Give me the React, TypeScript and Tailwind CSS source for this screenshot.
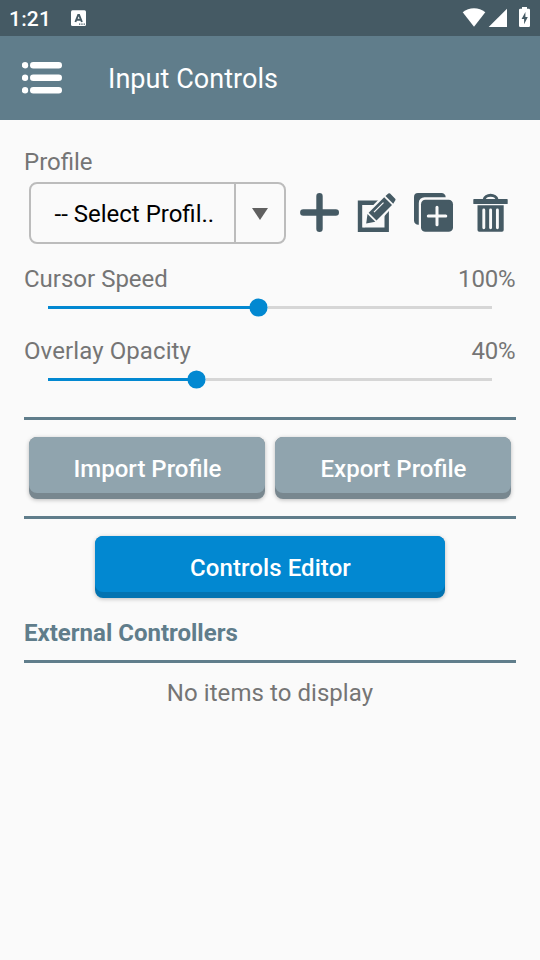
import type { ReactNode } from "react";

const StatusBar = () => (
  <div className="flex h-9 items-center bg-[#455a64] pl-[9px] text-white">
    <span className="w-[62px] pt-[2px] text-[21px] leading-[34px] font-medium tracking-[0.2px]">
      1:21
    </span>
    <svg className="h-4 w-[15px]" viewBox="0 0 15 16">
      <rect y=".3" width="15" height="15.7" rx="1.5" fill="#fff" />
      <path
        d="M4.4 12 7.2 5h.9l2.8 7M5.5 9.8h4.3"
        fill="none"
        stroke="#455a64"
        strokeWidth="1.9"
      />
      <path
        d="M8 14.2h1.3M10.3 14.2h1.3M12.6 14.2h1.3"
        stroke="#455a64"
        strokeWidth="1.2"
      />
    </svg>
    <svg className="ml-auto h-9 w-[80px]" viewBox="460 0 80 36" fill="#fff">
      <path d="M474 26.7 462.7 12.3C466 9.6 469.8 8.2 474 8.2s8 1.4 11.3 4.1z" />
      <path d="M507 8.7V27h-18.3z" />
      <path
        fillRule="evenodd"
        d="M522 7h5v1.8h1.8a1.2 1.2 0 0 1 1.2 1.2v15.8a1.2 1.2 0 0 1-1.2 1.2h-8.6a1.2 1.2 0 0 1-1.2-1.2V10a1.2 1.2 0 0 1 1.2-1.2h1.8zM525.4 12l-3.8 7h2.5v5.2l3.7-7.2h-2.4z"
      />
    </svg>
  </div>
);

const AppBar = () => (
  <header className="flex h-[84px] items-center bg-[#607d8b] pl-[22px] text-white">
    <svg className="h-8 w-10" viewBox="0 0 40 32" fill="#fff">
      <circle cx="3" cy="3.2" r="3.2" />
      <circle cx="3" cy="15.8" r="3.2" />
      <circle cx="3" cy="28.3" r="3.2" />
      <rect x="8" y="0" width="32" height="6.5" rx="3.25" />
      <rect x="8" y="12.5" width="32" height="6.5" rx="3.25" />
      <rect x="8" y="25" width="32" height="6.5" rx="3.25" />
    </svg>
    <h1 className="ml-[46px] pt-[2px] text-[27px] leading-8 tracking-[0.05px]">
      Input Controls
    </h1>
  </header>
);

const IconButton = ({
  label,
  children,
}: {
  label: string;
  children: ReactNode;
}) => (
  <button aria-label={label} className="h-10 w-10">
    <svg className="h-10 w-10" viewBox="0 0 40 40" fill="#455a64">
      {children}
    </svg>
  </button>
);

const ProfileActions = () => (
  <div className="ml-[14px] flex gap-[17px] pb-[2px]">
    <IconButton label="Add profile">
      <path
        d="M19.5 4.2v32.5M3.3 20.5h32.5"
        stroke="#455a64"
        strokeWidth="6.4"
        strokeLinecap="round"
      />
    </IconButton>
    <IconButton label="Edit profile">
      <path
        d="M3 10.800h26.700v26.900H3z"
        fill="none"
        stroke="#455a64"
        strokeWidth="4.4"
      />
      <path d="M30-1 40.5 9.5 21 31.3 6.500 35.500 9.800 19.800z" fill="#fafafa" />
      <path d="M10.5 22 18.3 29.7 9.2 31.6z" />
      <path d="M11.7 20.7 27.2 5.3 35 13.1 19.5 28.5z" />
      <path d="M28.5 4.1 31.3 1.6a1.3 1.3 0 0 1 1.8 0l5.1 5.1a1.3 1.3 0 0 1 0 1.8L36.2 11.8z" />
      <path d="M17 20.1 26.5 10.6" stroke="#fafafa" strokeWidth="1.3" />
    </IconButton>
    <IconButton label="Duplicate profile">
      <path d="M4 1h23.5a4.2 4.2 0 0 1 4.2 4.2H10.5a5.7 5.7 0 0 0-5.7 5.7v21.8a4.2 4.2 0 0 1-4.8-4V5a4 4 0 0 1 4-4z" />
      <rect x="7" y="7.8" width="32" height="32" rx="4.4" />
      <path
        d="M23 15.2v17.5M14.3 24h17.5"
        stroke="#fafafa"
        strokeWidth="3"
        strokeLinecap="round"
      />
    </IconButton>
    <IconButton label="Delete profile">
      <path
        d="M13 7.7a6.7 5.4 0 0 1 13.2 0"
        fill="none"
        stroke="#455a64"
        strokeWidth="2.8"
      />
      <rect x="2.3" y="7.1" width="34.4" height="5" rx=".7" />
      <path d="M6.5 13.3h26.2v24.7a1.7 1.7 0 0 1-1.7 1.7H8.2a1.7 1.7 0 0 1-1.7-1.7z" />
      <path
        d="M12.8 18v17.8M19.6 18v17.8M26.4 18v17.8"
        stroke="#fafafa"
        strokeWidth="2.9"
        strokeLinecap="round"
      />
    </IconButton>
  </div>
);

const ProfileSelect = () => (
  <button className="ml-[5px] flex h-[62px] w-[257px] rounded-[8px] border-2 border-[#bcbcbc] text-left text-black">
    <span className="flex h-full w-[205px] items-center border-r-2 border-[#bcbcbc] pt-[2px] pl-[23.5px] whitespace-pre">
      -- Select Profil..
    </span>
    <span className="flex h-full flex-1 items-center justify-center pt-px">
      <svg className="h-3 w-4" viewBox="0 0 16 12" fill="#606060">
        <path d="M0 0h16L8 12z" />
      </svg>
    </span>
  </button>
);

const Slider = ({
  label,
  value,
  position,
}: {
  label: string;
  value: string;
  position: number;
}) => (
  <div className="h-[72px]">
    <div className="flex justify-between">
      <span>{label}</span>
      <span className="pr-[0.5px] tracking-[-0.15px]">{value}</span>
    </div>
    <div className="mx-6 mt-[5px] flex h-[19px] items-center">
      <div className="h-[3px] bg-[#0288d1]" style={{ width: position - 9 }} />
      <svg
        className="-mx-[0.5px] size-[19px] shrink-0"
        viewBox="0 0 19 19"
        fill="#0288d1"
      >
        <circle cx="9.5" cy="9.5" r="9.1" />
      </svg>
      <div className="h-[3px] flex-1 bg-[#d6d6d6]" />
    </div>
  </div>
);

const Divider = () => <div className="h-[3px] bg-[#607d8b]" />;

const GrayButton = ({ children }: { children: ReactNode }) => (
  <button className="h-[62px] flex-1 rounded-[8px] bg-[#78878f] pb-[6px] font-medium text-white shadow-[0_1px_4px_rgba(0,0,0,0.25)]">
    <span className="flex h-full items-center justify-center rounded-[8px] bg-[#90a4ae] pt-[7px] pl-px">
      {children}
    </span>
  </button>
);

export default function App() {
  return (
    <div className="h-[960px] w-[540px] overflow-hidden bg-[#fafafa] font-['Roboto',sans-serif] text-[24px] leading-7 text-[#757575]">
      <StatusBar />
      <AppBar />
      <main className="px-6 pt-7">
        <div>Profile</div>
        <div className="mt-[6px] mb-[21px] flex items-center">
          <ProfileSelect />
          <ProfileActions />
        </div>
        <Slider label="Cursor Speed" value="100%" position={210.5} />
        <div className="tracking-[0.1px]">
          <Slider label="Overlay Opacity" value="40%" position={148.5} />
        </div>
        <div className="h-2" />
        <Divider />
        <div className="my-[17px] flex gap-[10px] px-[5px]">
          <GrayButton>Import Profile</GrayButton>
          <GrayButton>Export Profile</GrayButton>
        </div>
        <Divider />
        <button className="mx-auto mt-[17px] block h-[62px] w-[350px] rounded-[8px] bg-[#0273b1] pb-[6px] font-medium tracking-[0.08px] text-white shadow-[0_1px_4px_rgba(0,0,0,0.25)]">
          <span className="flex h-full items-center justify-center rounded-[8px] bg-[#0288d1] pt-[7px] pl-px">
            Controls Editor
          </span>
        </button>
        <h2 className="mt-[21px] mb-[13px] font-bold text-[#607d8b]">
          External Controllers
        </h2>
        <Divider />
        <p className="mt-4 text-center tracking-[0.06px]">
          No items to display
        </p>
      </main>
    </div>
  );
}
